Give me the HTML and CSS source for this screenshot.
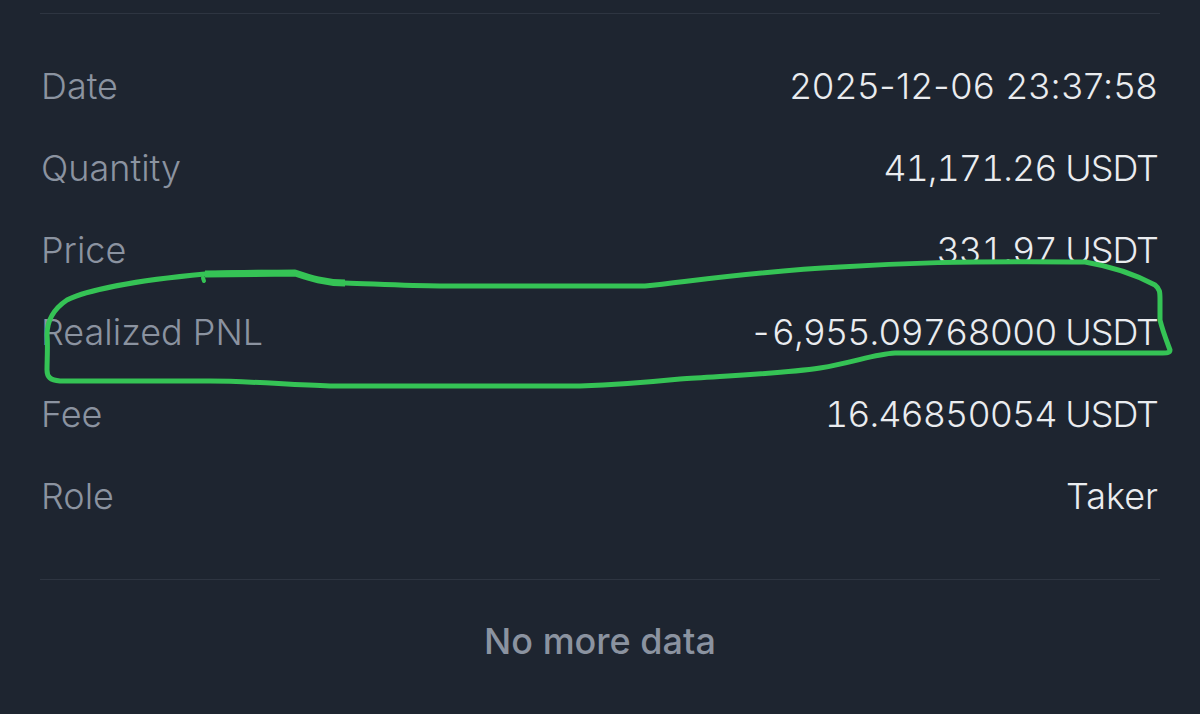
FILE: index.html
```html
<!DOCTYPE html>
<html lang="en">
<head>
    <meta charset="UTF-8">
    <meta name="viewport" content="width=device-width, initial-scale=1.0">
    <title>Trade Details</title>
    <link rel="stylesheet" href="styles.css">
</head>
<body>
    <div class="container">
        <ul class="details">
            <li><span class="label">Date</span><span class="value date">2025-12-06 23:37:58</span></li>
            <li><span class="label">Quantity</span><span class="value">41,171.26 USDT</span></li>
            <li><span class="label">Price</span><span class="value">331.97 USDT</span></li>
            <li><span class="label">Realized PNL</span><span class="value">-6,955.09768000 USDT</span></li>
            <li><span class="label">Fee</span><span class="value">16.46850054 USDT</span></li>
            <li><span class="label">Role</span><span class="value role">Taker</span></li>
        </ul>
        <div class="no-more">No more data</div>

        <!-- hand drawn marker around the PNL row -->
        <svg class="marker" viewBox="0 0 1200 714" width="1200" height="714">
            <path d="M47 335 C47 322 52 310 67 300 C85 291 130 281 205 274 C240 272 270 272 295 273 C310 278 325 283 345 283 C375 284 410 286 440 286 L645 286 C700 280 760 271 840 267 C900 263 960 261 1085 262 C1115 267 1140 277 1155 285 C1160 289 1160 292 1160 300 L1160 320 C1163 332 1167 342 1170 350 C1170 353 1167 353 1160 353 L895 353 C875 354 855 362 820 368 C780 374 720 376 680 379 C640 383 610 385 580 386 L330 386 C290 385 250 381 210 381 L60 381 C50 380 47 377 47 370 C47 360 48 345 47 335 Z"/>
            <path class="thick" d="M205 274 L295 273 C310 278 325 283 345 283"/>
            <path class="blob" d="M203 278 L204 281"/>
        </svg>
    </div>
</body>
</html>
```

FILE: styles.css
```css
* {
    box-sizing: border-box;
}

body {
    margin: 0;
    background-color: #1e2530;
    font-family: 'Inter', 'Liberation Sans', sans-serif;
}

.container {
    position: relative;
    width: 1200px;
    height: 714px;
    padding: 13px 40px 0;
    overflow: hidden;
}

.details {
    list-style: none;
    margin: 0;
    padding: 31px 2px 42px 1px;
    border-top: 1px solid #2e3541;
    border-bottom: 1px solid #2e3541;
}

.details li {
    display: flex;
    justify-content: space-between;
    align-items: center;
    height: 82px;
    font-size: 36px;
    font-weight: 300;
}

.label {
    color: #8b93a0;
}

.value {
    color: #eaecef;
    font-variant-numeric: tabular-nums;
    letter-spacing: -1px;
}

.value.date {
    font-variant-numeric: normal;
    letter-spacing: 0.5px;
}

.value.role {
    letter-spacing: 0;
}

.no-more {
    margin-top: 39px;
    text-align: center;
    font-size: 36px;
    font-weight: 500;
    color: #8b93a0;
}

.marker {
    position: absolute;
    top: 0;
    left: 0;
    fill: none;
    stroke: #35c355;
    stroke-width: 5;
    stroke-linejoin: round;
}

.marker .thick {
    stroke-width: 7;
}

.marker .blob {
    stroke-width: 4;
    stroke-linecap: round;
}
```
